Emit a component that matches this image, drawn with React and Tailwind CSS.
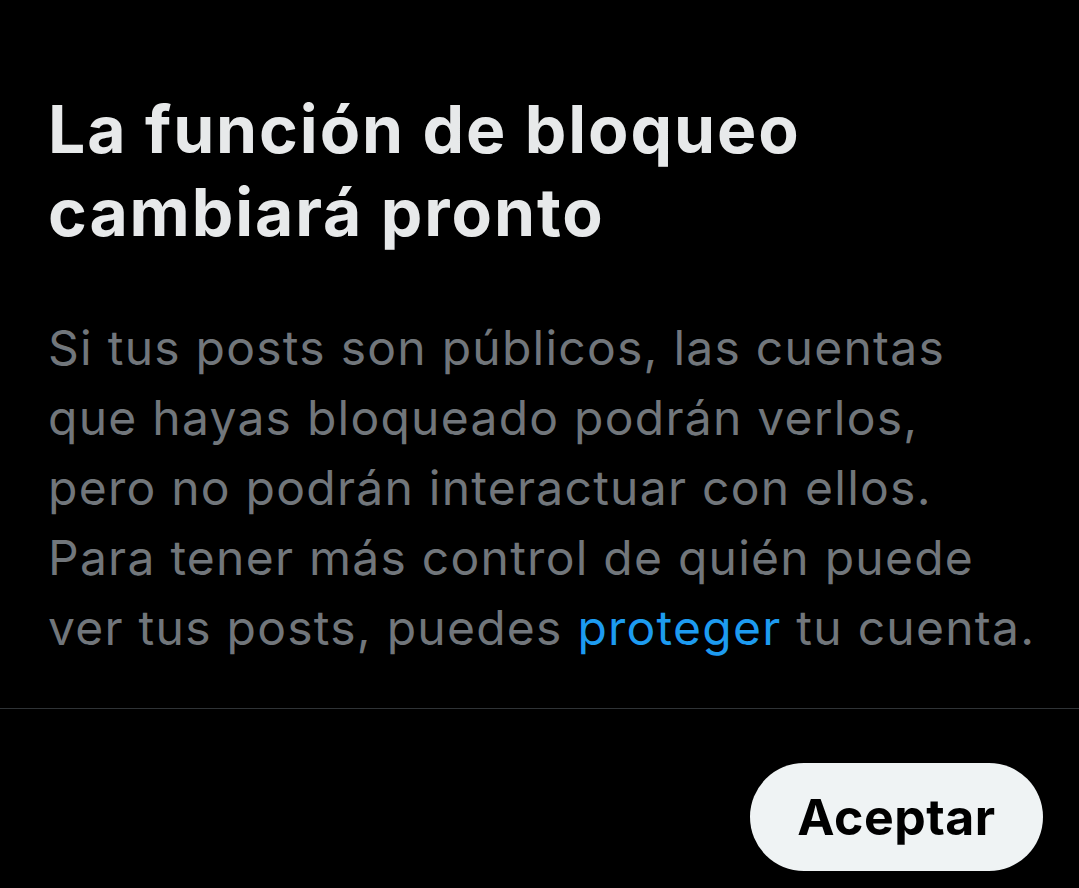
import React from 'react';

const BODY_LINES = [
  'Si tus posts son públicos, las cuentas',
  'que hayas bloqueado podrán verlos,',
  'pero no podrán interactuar con ellos.',
  'Para tener más control de quién puede',
];

const BlockChangeNotice = () => {
  return (
    <div
      className="w-[1079px] h-[888px] bg-black overflow-hidden flex flex-col"
      style={{ fontFamily: 'Inter, "Noto Sans", sans-serif' }}
    >
      {/* TITLE + BODY */}
      <div className="px-[48px] pt-[88px]">
        <h1 className="text-[66px] leading-[83px] font-bold text-[#e7e9ea] tracking-[1.9px]">
          La función de bloqueo
          <br />
          cambiará pronto
        </h1>
        <p className="mt-[59px] text-[48px] leading-[70px] text-[#71767b] tracking-[1.25px]">
          {BODY_LINES.map((line) => (
            <span key={line} className="block whitespace-nowrap">
              {line}
            </span>
          ))}
          <span className="block whitespace-nowrap">
            ver tus posts, puedes <span className="text-[#1d9bf0]">proteger</span> tu cuenta.
          </span>
        </p>
      </div>

      {/* FOOTER */}
      <div className="mt-[45px] border-t border-[#2f3336] flex justify-end pt-[54px] pr-[36px]">
        <button className="w-[293px] h-[108px] rounded-full bg-[#eff3f4] text-black text-[50px] font-bold tracking-[0.5px]">
          Aceptar
        </button>
      </div>
    </div>
  );
};

export default function App() {
  return <BlockChangeNotice />;
}
